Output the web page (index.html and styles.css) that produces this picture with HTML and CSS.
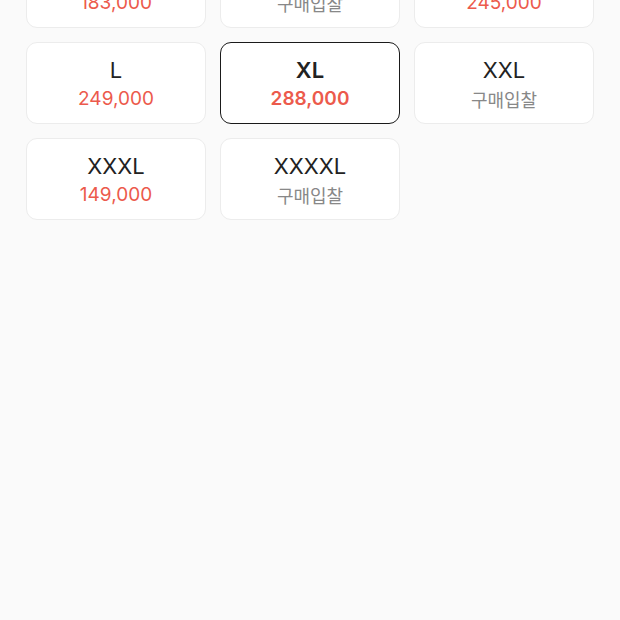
FILE: index.html
```html
<!DOCTYPE html>
<html>
<head>
	<meta charset="utf-8">
	<title>사이즈 선택</title>
	<link rel="stylesheet" href="styles.css">
</head>
<body>
	<div class="size-list">
		<div class="size-item">
			<p class="size-name">S</p>
			<p class="size-price">183,000</p>
		</div>
		<div class="size-item">
			<p class="size-name">M</p>
			<p class="size-price none">구매입찰</p>
		</div>
		<div class="size-item">
			<p class="size-name">M</p>
			<p class="size-price">245,000</p>
		</div>
		<div class="size-item">
			<p class="size-name">L</p>
			<p class="size-price">249,000</p>
		</div>
		<div class="size-item on">
			<p class="size-name">XL</p>
			<p class="size-price">288,000</p>
		</div>
		<div class="size-item">
			<p class="size-name">XXL</p>
			<p class="size-price none">구매입찰</p>
		</div>
		<div class="size-item">
			<p class="size-name">XXXL</p>
			<p class="size-price">149,000</p>
		</div>
		<div class="size-item">
			<p class="size-name">XXXXL</p>
			<p class="size-price none">구매입찰</p>
		</div>
	</div>
</body>
</html>
```

FILE: styles.css
```css
*{margin: 0;padding: 0;}
html,body {
	height: 100%;
	overflow: hidden;
}
body {
	background: #fafafa;
	font-family: Inter, "Noto Sans CJK KR", sans-serif;
	color: #222;
}
.size-list {
	display: grid;
	grid-template-columns: repeat(3, 180px);
	gap: 14px;
	padding: 0 26px;
	margin-top: -54px;
}
.size-item {
	height: 82px;
	box-sizing: border-box;
	background: #fff;
	border: 1px solid #ececec;
	border-radius: 11px;
	display: flex;
	flex-direction: column;
	align-items: center;
	justify-content: center;
	gap: 4px;
	padding-top: 2px;
}
.size-item.on {
	border: 1.5px solid #1a1a1a;
}
.size-name {
	font-size: 22px;
	line-height: 26px;
}
.size-price {
	font-size: 19px;
	line-height: 24px;
	color: #ec5a4c;
}
.size-price.none {
	color: #888;
	font-size: 18px;
	font-family: "Noto Sans CJK KR", sans-serif;
}
.on .size-name,
.on .size-price {
	font-weight: 600;
}
```
